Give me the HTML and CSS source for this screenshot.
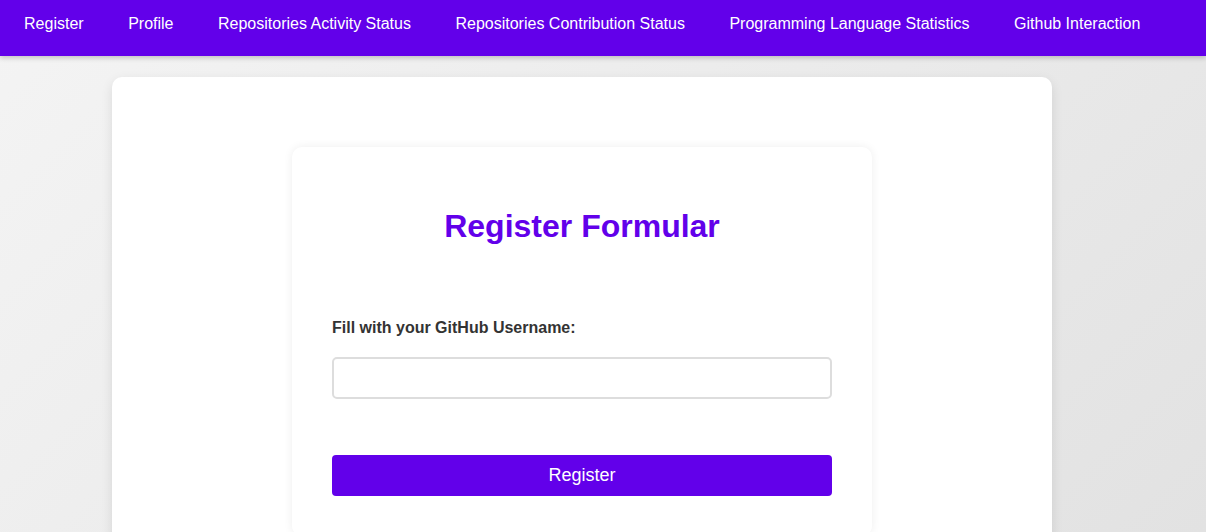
FILE: index.html
```html
<!DOCTYPE html>
<html lang="en">
<head>
<meta charset="utf-8">
<title>Register Formular</title>
<link rel="stylesheet" href="styles.css">
</head>
<body>
<nav class="topnav">
  <a class="nav-link" href="#">Register</a>
  <a class="nav-link" href="#">Profile</a>
  <a class="nav-link" href="#">Repositories Activity Status</a>
  <a class="nav-link" href="#">Repositories Contribution Status</a>
  <a class="nav-link" href="#">Programming Language Statistics</a>
  <a class="nav-link" href="#">Github Interaction</a>
</nav>
<main class="page">
  <section class="outer-card">
    <div class="form-card">
      <h2 class="form-title">Register Formular</h2>
      <form class="form">
        <label class="form-label" for="username">Fill with your GitHub Username:</label>
        <input class="form-input" id="username" type="text">
        <button class="form-button" type="button">Register</button>
      </form>
    </div>
  </section>
</main>
</body>
</html>
```
FILE: styles.css
```css
* { box-sizing: border-box; }
html, body { height: 100%; }
body {
  margin: 0;
  font-family: "Liberation Sans", Arial, sans-serif;
  background: linear-gradient(135deg, #f4f4f4 0%, #e2e2e2 100%);
  overflow: hidden;
}
.topnav {
  height: 56px;
  background: #6200ea;
  display: flex;
  align-items: flex-start;
  padding: 15px 0 0 1.8px;
  box-shadow: 0 2px 5px rgba(0,0,0,0.2);
  position: relative;
  z-index: 1;
}
.nav-link {
  color: #fff;
  text-decoration: none;
  font-size: 16px;
  line-height: 18px;
  padding: 0 22.25px;
  white-space: nowrap;
}
.page {
  display: flex;
  padding: 21px 0 0 112px;
}
.outer-card {
  width: 940px;
  background: #fff;
  border-radius: 10px;
  box-shadow: 0 4px 12px rgba(0,0,0,0.1);
  padding: 70px 180px 40px;
  min-height: 600px;
}
.form-card {
  background: #fff;
  border-radius: 10px;
  box-shadow: 0 0 10px rgba(0,0,0,0.07);
  padding: 61px 40px 40px;
}
.form-title {
  margin: 0;
  text-align: center;
  color: #6200ea;
  font-size: 32px;
  font-weight: bold;
  line-height: 37px;
}
.form {
  display: flex;
  flex-direction: column;
  margin-top: 73px;
}
.form-label {
  font-size: 16px;
  font-weight: bold;
  color: #333;
  line-height: 19px;
}
.form-input {
  margin-top: 20px;
  height: 42px;
  border: 2px solid #ddd;
  border-radius: 5px;
  font-size: 16px;
  padding: 8px 10px;
  background: #fff;
  outline: none;
}
.form-button {
  margin-top: 56px;
  height: 41px;
  border: none;
  border-radius: 4px;
  background: #6200ea;
  color: #fff;
  font-family: "Liberation Sans", Arial, sans-serif;
  font-size: 18px;
  cursor: pointer;
}
```
